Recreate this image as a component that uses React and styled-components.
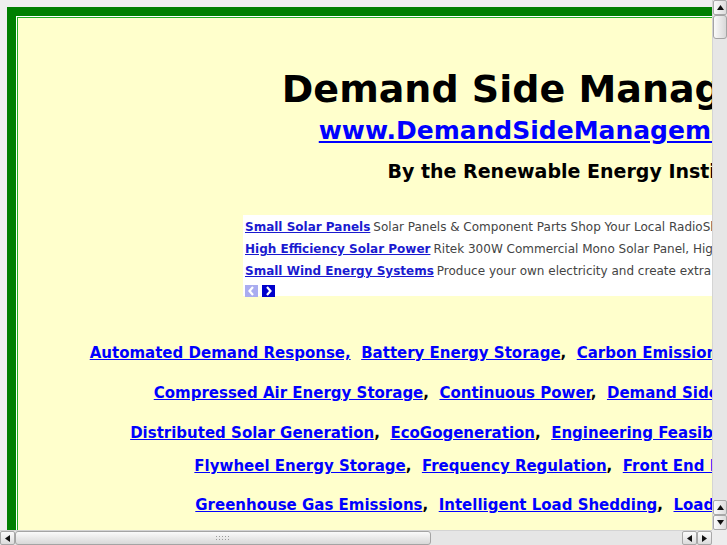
import React from "react";
import styled, { createGlobalStyle } from "styled-components";

const GlobalStyle = createGlobalStyle`
  html, body {
    margin: 0;
    padding: 0;
    overflow: hidden;
    background: #ededed;
    font-family: "DejaVu Sans", Verdana, sans-serif;
  }
`;

const Screen = styled.div`
  display: grid;
  grid-template-columns: 712px 15px;
  grid-template-rows: 530px 15px;
  width: 727px;
  height: 545px;
  background: #ededed;
`;

const Viewport = styled.div`
  min-width: 0;
  overflow: hidden;
  background: #efefef;
`;

const Page = styled.div`
  padding: 7px;
  width: max-content;
`;

const OuterFrame = styled.div`
  border: 9px solid #008000;
  background: #ffffff;
  padding: 1px;
`;

const InnerFrame = styled.div`
  border: 1px solid #22b022;
  background: #ffffcc;
  width: 1086px;
  padding: 49px 0 40px;
  text-align: center;
`;

const Header = styled.header`
  padding-left: 18px;
`;

const Title = styled.h1`
  margin: 0;
  font-size: 38px;
  font-weight: bold;
  line-height: 44px;
  color: #000;
`;

const SiteLink = styled.a`
  display: inline-block;
  margin-top: 5px;
  margin-left: 4px;
  font-size: 25px;
  font-weight: bold;
  line-height: 29px;
  color: #0000ff;
  text-decoration: underline;
`;

const Byline = styled.div`
  margin-top: 15px;
  padding-left: 8px;
  font-size: 19px;
  font-weight: bold;
  line-height: 22px;
  color: #000;
`;

const AdBox = styled.div`
  margin: 33px 0 0 225px;
  width: 728px;
  height: 81px;
  background: #ffffff;
  text-align: left;
  padding: 1px 2px 0;
  box-sizing: border-box;
`;

const AdLine = styled.div`
  font-size: 12px;
  line-height: 22px;
  white-space: nowrap;
  color: #444;
`;

const AdLink = styled.a`
  color: #1a1ad0;
  font-weight: bold;
  text-decoration: underline;
  margin-right: 3px;
`;

const AdNav = styled.div`
  display: flex;
  gap: 4px;
  margin-top: 3px;
`;

const NavButton = styled.span`
  width: 13px;
  height: 12px;
  display: flex;
  align-items: center;
  justify-content: center;
  background: ${(p) => (p.$active ? "#0000cc" : "#a9acf0")};
`;

const Keywords = styled.div`
  margin-top: 48px;
`;

const KeywordRow = styled.div`
  font-size: 15px;
  font-weight: bold;
  line-height: 18px;
  white-space: nowrap;
  margin-top: ${(p) => p.$gap}px;
  color: #000;
`;

const KeywordLink = styled.a`
  color: #0000ff;
  text-decoration: underline;
`;

/* scrollbars */
const VScroll = styled.div`
  display: flex;
  flex-direction: column;
  background: #e6e6e6;
  border-left: 1px solid #d4d4d4;
  box-sizing: border-box;
`;

const HScroll = styled.div`
  display: flex;
  background: #e6e6e6;
  border-top: 1px solid #d4d4d4;
  box-sizing: border-box;
`;

const Corner = styled.div`
  background: #ededed;
`;

const ArrowBtn = styled.div`
  flex: 0 0 auto;
  width: ${(p) => (p.$horizontal ? "15px" : "100%")};
  height: ${(p) => (p.$horizontal ? "100%" : "15px")};
  display: flex;
  align-items: center;
  justify-content: center;
  background: linear-gradient(${(p) => (p.$horizontal ? "180deg" : "90deg")}, #fbfbfb, #dcdcdc);
  border: 1px solid #a8a8a8;
  border-radius: 2px;
  box-sizing: border-box;
`;

const Thumb = styled.div`
  flex: 0 0 auto;
  width: ${(p) => (p.$horizontal ? `${p.$size}px` : "100%")};
  height: ${(p) => (p.$horizontal ? "100%" : `${p.$size}px`)};
  background: linear-gradient(${(p) => (p.$horizontal ? "180deg" : "90deg")}, #fafafa, #d8d8d8);
  border: 1px solid #a4a4a4;
  border-radius: 3px;
  box-sizing: border-box;
  display: flex;
  align-items: center;
  justify-content: center;
`;

const Track = styled.div`
  flex: 1 1 auto;
`;

const Grip = styled.div`
  width: 16px;
  height: 7px;
  background-image: radial-gradient(circle, #9a9a9a 0.6px, transparent 0.9px);
  background-size: 3px 3px;
`;

const Tri = ({ dir, color = "#111", size = 7 }) => {
  const pts = {
    up: "0,6 7,6 3.5,1",
    down: "0,1 7,1 3.5,6",
    left: "6,0 6,7 1,3.5",
    right: "1,0 1,7 6,3.5",
  }[dir];
  return (
    <svg width={size} height={size} viewBox="0 0 7 7">
      <polygon points={pts} fill={color} />
    </svg>
  );
};

const Chevron = ({ dir }) => (
  <svg width="9" height="10" viewBox="0 0 9 10">
    <path
      d={dir === "left" ? "M6 1 L2.5 5 L6 9" : "M3 1 L6.5 5 L3 9"}
      stroke="#fff"
      strokeWidth="2.2"
      fill="none"
    />
  </svg>
);

const ads = [
  {
    title: "Small Solar Panels",
    text: "Solar Panels & Component Parts Shop Your Local RadioShack Store Today.",
  },
  {
    title: "High Efficiency Solar Power",
    text: "Ritek 300W Commercial Mono Solar Panel, Highest Efficiency in its Class",
  },
  {
    title: "Small Wind Energy Systems",
    text: "Produce your own electricity and create extra income for your farm.",
  },
];

const rows = [
  {
    gap: 0,
    items: [
      "Automated Demand Response,",
      "Battery Energy Storage",
      "Carbon Emissions Reductions",
      "Cogeneration Systems",
    ],
  },
  {
    gap: 22,
    items: [
      "Compressed Air Energy Storage",
      "Continuous Power",
      "Demand Side Management",
      "Demand Limit",
    ],
  },
  {
    gap: 22,
    items: [
      "Distributed Solar Generation",
      "EcoGogeneration",
      "Engineering Feasibility Study",
      "Energy Audit Service",
    ],
  },
  {
    gap: 15,
    items: [
      "Flywheel Energy Storage",
      "Frequency Regulation",
      "Front End Engineering",
      "Gas Turbine",
    ],
  },
  {
    gap: 21,
    items: [
      "Greenhouse Gas Emissions",
      "Intelligent Load Shedding",
      "Load Management",
      "Microgrid",
    ],
  },
];

export default function App() {
  return (
    <>
      <GlobalStyle />
      <Screen>
        <Viewport>
          <Page>
            <OuterFrame>
              <InnerFrame>
                <Header>
                  <Title>Demand Side Management</Title>
                  <SiteLink href="#">www.DemandSideManagement.com</SiteLink>
                  <Byline>By the Renewable Energy Institute</Byline>
                </Header>
                <AdBox>
                  {ads.map((ad) => (
                    <AdLine key={ad.title}>
                      <AdLink href="#">{ad.title}</AdLink>
                      {ad.text}
                    </AdLine>
                  ))}
                  <AdNav>
                    <NavButton>
                      <Chevron dir="left" />
                    </NavButton>
                    <NavButton $active>
                      <Chevron dir="right" />
                    </NavButton>
                  </AdNav>
                </AdBox>
                <Keywords>
                  {rows.map((row, i) => (
                    <KeywordRow key={i} $gap={row.gap}>
                      {row.items.map((item, j) => (
                        <React.Fragment key={item}>
                          <KeywordLink href="#">{item}</KeywordLink>
                          {j < row.items.length - 1 &&
                            (item.endsWith(",") ? "\u00a0 " : ",\u00a0 ")}
                        </React.Fragment>
                      ))}
                    </KeywordRow>
                  ))}
                </Keywords>
              </InnerFrame>
            </OuterFrame>
          </Page>
        </Viewport>
        <VScroll>
          <ArrowBtn>
            <Tri dir="up" />
          </ArrowBtn>
          <Thumb $size={24} />
          <Track />
          <ArrowBtn>
            <Tri dir="up" />
          </ArrowBtn>
          <ArrowBtn>
            <Tri dir="down" />
          </ArrowBtn>
        </VScroll>
        <HScroll>
          <ArrowBtn $horizontal>
            <Tri dir="left" />
          </ArrowBtn>
          <Thumb $horizontal $size={416}>
            <Grip />
          </Thumb>
          <Track />
          <ArrowBtn $horizontal>
            <Tri dir="left" />
          </ArrowBtn>
          <ArrowBtn $horizontal>
            <Tri dir="right" />
          </ArrowBtn>
        </HScroll>
        <Corner />
      </Screen>
    </>
  );
}
